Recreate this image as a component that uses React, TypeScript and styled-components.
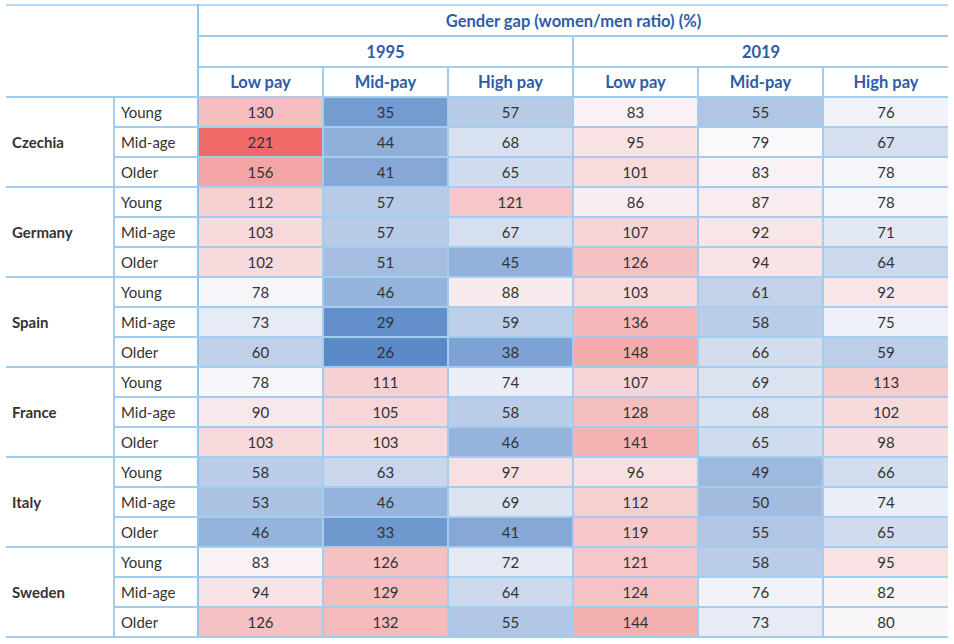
import React from 'react'
import styled, { createGlobalStyle } from 'styled-components'

const GlobalStyle = createGlobalStyle`
  body {
    margin: 0;
    background: #ffffff;
    font-family: Lato, 'Liberation Sans', sans-serif;
  }
`

type Row = { country: string; values: number[][] }

// each country: Young, Mid-age, Older -> [1995 low, mid, high, 2019 low, mid, high]
const data: Row[] = [
  { country: 'Czechia', values: [[130, 35, 57, 83, 55, 76], [221, 44, 68, 95, 79, 67], [156, 41, 65, 101, 83, 78]] },
  { country: 'Germany', values: [[112, 57, 121, 86, 87, 78], [103, 57, 67, 107, 92, 71], [102, 51, 45, 126, 94, 64]] },
  { country: 'Spain', values: [[78, 46, 88, 103, 61, 92], [73, 29, 59, 136, 58, 75], [60, 26, 38, 148, 66, 59]] },
  { country: 'France', values: [[78, 111, 74, 107, 69, 113], [90, 105, 58, 128, 68, 102], [103, 103, 46, 141, 65, 98]] },
  { country: 'Italy', values: [[58, 63, 97, 96, 49, 66], [53, 46, 69, 112, 50, 74], [46, 33, 41, 119, 55, 65]] },
  { country: 'Sweden', values: [[83, 126, 72, 121, 58, 95], [94, 129, 64, 124, 76, 82], [126, 132, 55, 144, 73, 80]] }
]

const ages = ['Young', 'Mid-age', 'Older']
const pays = ['Low pay', 'Mid-pay', 'High pay']

const WHITE = [249, 248, 251]
const RED = [240, 106, 106]
const BLUE = [90, 137, 200]

const mix = (a: number[], b: number[], t: number) =>
  `rgb(${a.map((v, i) => Math.round(v + (b[i] - v) * t)).join(',')})`

const cellColor = (v: number): string => {
  const mid = 79
  if (v >= mid)
    return mix(WHITE, RED, Math.pow(Math.min(1, (v - mid) / (221 - mid)), 0.85))
  return mix(WHITE, BLUE, Math.min(1, (mid - v) / (mid - 26)))
}

const LINE = '#a2cdee'

const Wrapper = styled.div`
  padding: 4px 6px;
`

const Table = styled.table`
  width: 942px;
  border-collapse: collapse;
  table-layout: fixed;
  border-top: 2px solid #b6d9f1;
  border-bottom: 2px solid ${LINE};
  color: #333333;
  font-size: 15px;
`

const HeadRow = styled.tr<{ $h: number }>`
  height: ${(p) => p.$h}px;
`

const BodyRow = styled.tr`
  height: 30px;
`

const Blank = styled.th`
  border-bottom: 2px solid ${LINE};
  border-right: 2px solid #8ec5ec;
`

const HeadCell = styled.th<{ $divider?: boolean }>`
  padding: 0;
  color: #2f5ca8;
  font-size: 16.5px;
  font-weight: 700;
  text-align: center;
  border-bottom: 2px solid ${LINE};
  border-left: ${(p) => (p.$divider ? `2px solid ${LINE}` : 'none')};
`

const CountryCell = styled.td`
  padding: 0 0 0 6px;
  font-weight: 700;
  color: #333333;
  border-bottom: 2px solid ${LINE};
  border-right: 2px solid ${LINE};
`

const AgeCell = styled.td`
  padding: 0 0 0 6px;
  border-bottom: 2px solid ${LINE};
  border-right: 2px solid #8ec5ec;
`

const ValueCell = styled.td<{ $last?: boolean }>`
  padding: 0;
  text-align: center;
  border-bottom: 2px solid ${LINE};
  border-right: ${(p) => (p.$last ? 'none' : `2px solid ${LINE}`)};
`

export default function App() {
  return (
    <>
      <GlobalStyle />
      <Wrapper>
        <Table>
          <colgroup>
            <col style={{ width: 108 }} />
            <col style={{ width: 84 }} />
            {Array.from({ length: 6 }).map((_, i) => (
              <col key={i} style={{ width: 125 }} />
            ))}
          </colgroup>
          <thead>
            <HeadRow $h={31}>
              <Blank colSpan={2} rowSpan={3} />
              <HeadCell colSpan={6}>Gender gap (women/men ratio) (%)</HeadCell>
            </HeadRow>
            <HeadRow $h={31}>
              <HeadCell colSpan={3}>1995</HeadCell>
              <HeadCell colSpan={3} $divider>
                2019
              </HeadCell>
            </HeadRow>
            <HeadRow $h={30}>
              {[...pays, ...pays].map((p, i) => (
                <HeadCell key={i} $divider={i > 0}>
                  {p}
                </HeadCell>
              ))}
            </HeadRow>
          </thead>
          <tbody>
            {data.map((row) =>
              row.values.map((vals, ai) => (
                <BodyRow key={row.country + ai}>
                  {ai === 0 && <CountryCell rowSpan={3}>{row.country}</CountryCell>}
                  <AgeCell>{ages[ai]}</AgeCell>
                  {vals.map((v, vi) => (
                    <ValueCell
                      key={vi}
                      $last={vi === vals.length - 1}
                      style={{ backgroundColor: cellColor(v) }}
                    >
                      {v}
                    </ValueCell>
                  ))}
                </BodyRow>
              ))
            )}
          </tbody>
        </Table>
      </Wrapper>
    </>
  )
}
